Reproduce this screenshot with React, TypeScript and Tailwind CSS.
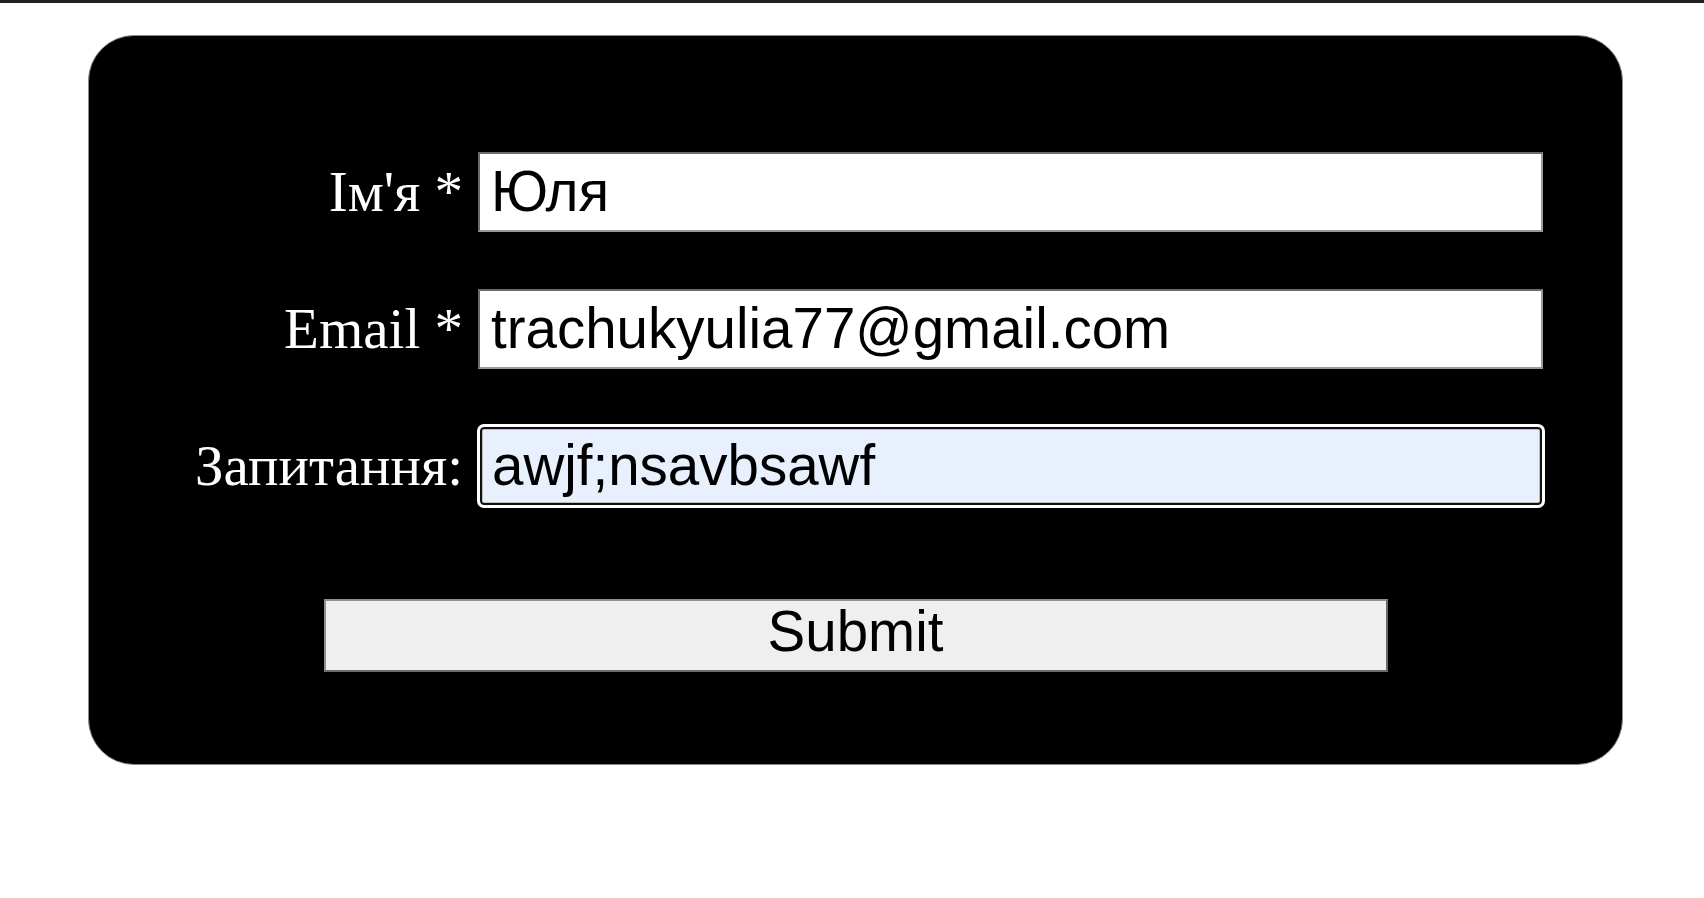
import React from "react";

export default function App() {
  const labelCls =
    "w-[389px] shrink-0 text-right text-white text-[57px] leading-none pr-[15px]";
  const serif = { fontFamily: '"Liberation Serif", "Times New Roman", serif' };
  const sans = { fontFamily: '"Liberation Sans", Arial, sans-serif' };
  return (
    <div className="w-full h-[898px] bg-white overflow-hidden">
      <div className="h-[3px] bg-[#202124]" />
      <div className="ml-[88px] mt-[32px] w-[1535px] h-[730px] bg-black rounded-[46px] border border-[#8a8a8a] flex flex-col">
        <form className="flex flex-col" onSubmit={(e) => e.preventDefault()}>
          <div className="flex items-baseline mt-[116px]">
            <label className={labelCls} style={serif}>
              Ім'я *
            </label>
            <input
              type="text"
              defaultValue="Юля"
              className="w-[1065px] h-[80px] bg-white text-black text-[56.5px] border-2 border-t-[#6b6b6b] border-l-[#6b6b6b] border-r-[#9a9a9a] border-b-[#9a9a9a] px-[11px] outline-none"
              style={sans}
            />
          </div>
          <div className="flex items-baseline mt-[57px]">
            <label className={labelCls} style={serif}>
              Email *
            </label>
            <input
              type="text"
              defaultValue="trachukyulia77@gmail.com"
              className="w-[1065px] h-[80px] bg-white text-black text-[56.5px] border-2 border-t-[#6b6b6b] border-l-[#6b6b6b] border-r-[#9a9a9a] border-b-[#9a9a9a] px-[11px] outline-none"
              style={sans}
            />
          </div>
          <div className="flex items-baseline mt-[55px]">
            <label className={labelCls} style={serif}>
              Запитання:
            </label>
            <input
              type="text"
              defaultValue="awjf;nsavbsawf"
              className="ml-[-1px] w-[1068px] h-[84px] bg-[#e8f0fe] text-black text-[56.5px] rounded-[7px] border-[3px] border-white px-[12px] outline-none shadow-[inset_0_0_0_2px_#101010,inset_0_0_0_3px_#bdbdbd]"
              style={sans}
            />
          </div>
          <button
            type="submit"
            className="mx-auto mt-[91px] w-[1064px] h-[73px] bg-[#efefef] text-black text-[56.5px] leading-none pb-[6px] border-2 border-t-[#8f8f8f] border-l-[#8f8f8f] border-r-[#6b6b6b] border-b-[#6b6b6b]"
            style={sans}
          >
            Submit
          </button>
        </form>
      </div>
    </div>
  );
}
